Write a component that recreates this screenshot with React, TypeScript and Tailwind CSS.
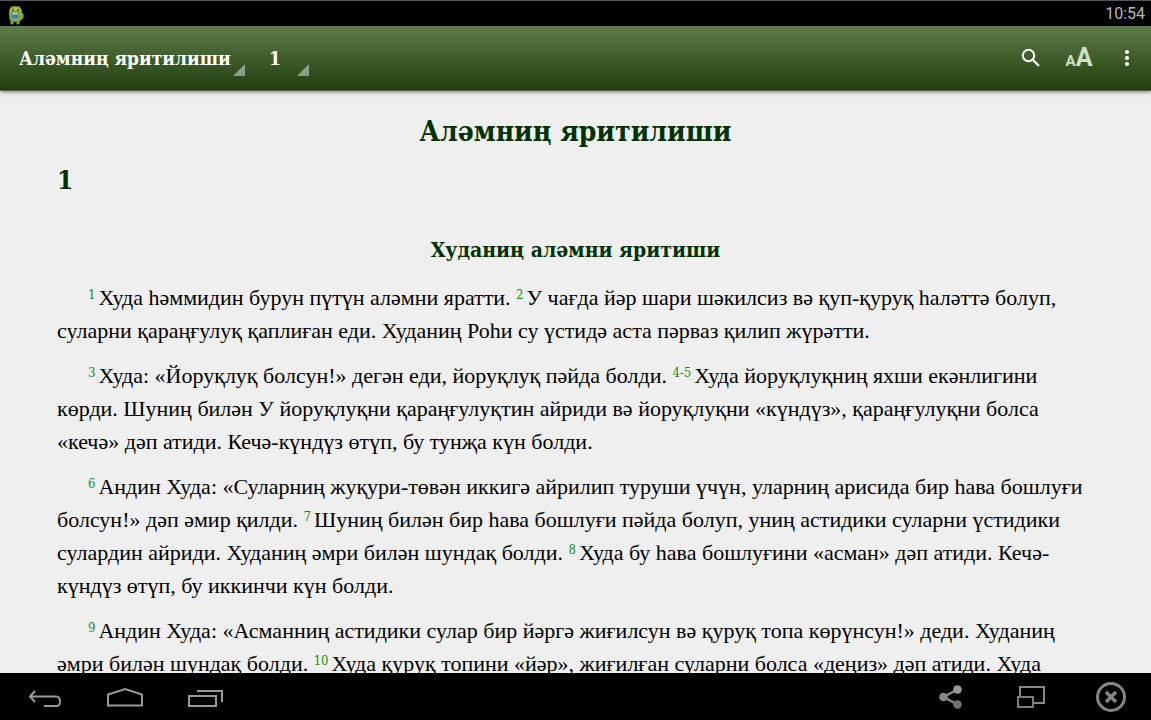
import React from "react";

interface Verse {
  label: string;
  text: string;
}

const paragraphs: Verse[][] = [
  [
    { label: "1", text: "Худа һәммидин бурун пүтүн аләмни яратти." },
    {
      label: "2",
      text: "У чағда йәр шари шәкилсиз вә қуп-қуруқ һаләттә болуп, суларни қараңғулуқ қаплиған еди. Худаниң Роһи су үстидә аста пәрваз қилип жүрәтти.",
    },
  ],
  [
    { label: "3", text: "Худа: «Йоруқлуқ болсун!» дегән еди, йоруқлуқ пәйда болди." },
    {
      label: "4-5",
      text: "Худа йоруқлуқниң яхши екәнлигини көрди. Шуниң билән У йоруқлуқни қараңғулуқтин айриди вә йоруқлуқни «күндүз», қараңғулуқни болса «кечә» дәп атиди. Кечә-күндүз өтүп, бу тунҗа күн болди.",
    },
  ],
  [
    {
      label: "6",
      text: "Андин Худа: «Суларниң жуқури-төвән иккигә айрилип туруши үчүн, уларниң арисида бир һава бошлуғи болсун!» дәп әмир қилди.",
    },
    {
      label: "7",
      text: "Шуниң билән бир һава бошлуғи пәйда болуп, униң астидики суларни үстидики сулардин айриди. Худаниң әмри билән шундақ болди.",
    },
    {
      label: "8",
      text: "Худа бу һава бошлуғини «асман» дәп атиди. Кечә-күндүз өтүп, бу иккинчи күн болди.",
    },
  ],
  [
    {
      label: "9",
      text: "Андин Худа: «Асманниң астидики сулар бир йәргә жиғилсун вә қуруқ топа көрүнсун!» деди. Худаниң әмри билән шундақ болди.",
    },
    { label: "10", text: "Худа қуруқ топини «йәр», жиғилған суларни болса «деңиз» дәп атиди. Худа" },
  ],
];

function StatusBar() {
  return (
    <div className="flex h-[26px] shrink-0 items-center justify-between border-t border-[#555] bg-black px-1.5">
      <svg width="20" height="22" viewBox="0 0 20 22" aria-hidden="true">
        <path d="M3 9Q3 3 9.500 3T16 9V16Q15 19 9.500 19T3.500 16Z" fill="#88a534" />
        <path d="M4 8Q4 4 9 4T15 8Z" fill="#a5bd49" />
        <path d="M5 18v3h2v-3M11 18v3h2v-3M16 10l1 1v4l-1 1" fill="#88a534" stroke="#88a534" />
        <path d="M5.500 4l-1-1M13 4l1-1" stroke="#748d2d" />
        <circle cx="7" cy="7" r="1" fill="#3c4a18" />
        <circle cx="12" cy="7" r="1" fill="#3c4a18" />
        <path d="M5.500 10h7v7h-7z" fill="#6aa3a8" />
        <path d="M6 12h6v3H6z" fill="#3b7fa4" />
        <path d="M7 10.500h4" stroke="#cfe0d0" />
      </svg>
      <span className="text-[16px] leading-6 text-[#b8b8b8]">10:54</span>
    </div>
  );
}

interface SpinnerProps {
  label: string;
  value: string;
  className?: string;
}

function Spinner({ label, value, className }: SpinnerProps) {
  return (
    <div className={`relative flex h-9 items-center ${className ?? ""}`}>
      <select
        aria-label={label}
        defaultValue={value}
        className="h-full w-full appearance-none bg-transparent font-['DejaVu_Serif_Condensed','DejaVu_Serif',serif] text-[19px] font-bold text-white outline-none"
      >
        <option>{value}</option>
      </select>
      <svg className="pointer-events-none absolute right-0 bottom-0" width="12" height="12" aria-hidden="true">
        <path d="M12 0V12H0Z" fill="#8c9f86" />
      </svg>
    </div>
  );
}

function AppBar() {
  return (
    <header className="z-10 flex h-[65px] shrink-0 items-center justify-between border-b border-[#55624d] bg-linear-to-b from-[#5f7c4b] to-[#213f0b] shadow-[0_1px_4px_rgba(0,0,0,0.5)]">
      <div className="flex items-center pl-[19px]">
        <Spinner label="Китап" value="Аләмниң яритилиши" className="w-[226px]" />
        <Spinner label="Бап" value="1" className="w-16 pl-6" />
      </div>
      <div className="flex items-center">
        <button aria-label="Издәш" className="flex size-12 items-center justify-center">
          <svg width="20" height="20" viewBox="0 0 20 20" fill="none" stroke="#fff" strokeWidth="2">
            <circle cx="7.500" cy="7.500" r="5.700" />
            <path d="M11.500 11.500L18 18" strokeWidth="2.300" />
          </svg>
        </button>
        <button
          aria-label="Хәт өлчими"
          className="flex size-12 items-baseline justify-center font-bold text-[#cfe2cc]"
        >
          <span className="text-[15px] leading-12">A</span>
          <span className="text-[25px] leading-12">A</span>
        </button>
        <button aria-label="Тизимлик" className="flex size-12 items-center justify-center">
          <svg width="6" height="18" viewBox="0 0 6 18" fill="#fff">
            <circle cx="3" cy="3" r="2.100" />
            <circle cx="3" cy="9" r="2.100" />
            <circle cx="3" cy="15" r="2.100" />
          </svg>
        </button>
      </div>
    </header>
  );
}

function Chapter() {
  return (
    <main className="min-h-0 flex-1 overflow-hidden bg-[#efefef] px-[57px] pt-[21px] font-['DejaVu_Serif_Condensed','DejaVu_Serif',serif] text-black">
      <h1 className="text-center text-[28px] leading-10 font-bold text-[#003300]">Аләмниң яритилиши</h1>
      <p className="mt-2 text-[26px] leading-10 font-bold text-[#003300]">1</p>
      <h2 className="mt-8 mb-[13px] text-center text-[21px] leading-9 font-bold text-[#003300]">
        Худаниң аләмни яритиши
      </h2>
      {paragraphs.map((verses) => (
        <p
          key={verses[0].label}
          className="mb-3 indent-[31px] font-['Liberation_Serif',serif] text-[22px] leading-[33px]"
        >
          {verses.map((verse) => (
            <React.Fragment key={verse.label}>
              <sup className="mr-[3px] font-['DejaVu_Serif_Condensed','DejaVu_Serif',serif] text-[13px] leading-none text-[#109018]">
                {verse.label}
              </sup>
              {verse.text}{" "}
            </React.Fragment>
          ))}
        </p>
      ))}
    </main>
  );
}

interface NavButtonProps {
  label: string;
  children: React.ReactNode;
}

function NavButton({ label, children }: NavButtonProps) {
  return (
    <button aria-label={label} className="flex h-full w-20 items-center justify-center">
      {children}
    </button>
  );
}

function NavigationBar() {
  return (
    <nav className="flex h-[47px] shrink-0 items-center justify-between bg-black">
      <div className="flex h-full items-center pl-[5px]">
        <NavButton label="Арқиға">
          <svg width="36" height="24" viewBox="0 0 36 24" fill="none" stroke="#999" strokeWidth="2">
            <path d="M8 6L3 11.500L8 17M3 11.500H29Q33 11.500 33 16.500T29 21H17" />
          </svg>
        </NavButton>
        <NavButton label="Баш бәт">
          <svg width="38" height="24" viewBox="0 0 38 24" fill="none" stroke="#999" strokeWidth="2">
            <path d="M2 20.500V9.500L19 4L36 9.500V20.500Z" />
          </svg>
        </NavButton>
        <NavButton label="Йеқинқилар">
          <svg width="36" height="24" viewBox="0 0 36 24" fill="none" stroke="#999" strokeWidth="2">
            <path d="M2 11H29V21H2ZM10 6H35V17" />
          </svg>
        </NavButton>
      </div>
      <div className="flex h-full items-center">
        <NavButton label="Бөлүшүш">
          <svg width="26" height="26" viewBox="0 0 26 26" fill="#888">
            <path d="M19.500 5.500L5.500 13L19.500 20.500" fill="none" stroke="#888" strokeWidth="2.500" />
            <circle cx="19.500" cy="5.500" r="4.300" fill="#999" />
            <circle cx="5.500" cy="13" r="4.300" />
            <circle cx="19.500" cy="20.500" r="4.300" fill="#707070" />
          </svg>
        </NavButton>
        <NavButton label="Көзнәк">
          <svg width="30" height="24" viewBox="0 0 30 24" fill="none" stroke="#888" strokeWidth="2">
            <path d="M4 12V2H28V18H17" />
            <path d="M2 12H17V22H2Z" stroke="#7c7c7c" />
          </svg>
        </NavButton>
        <NavButton label="Йепиш">
          <svg width="32" height="32" viewBox="0 0 32 32" fill="none" stroke="#858585">
            <circle cx="16" cy="16" r="13.500" strokeWidth="3" />
            <path d="M11 11L21 21M21 11L11 21" strokeWidth="3.500" />
          </svg>
        </NavButton>
      </div>
    </nav>
  );
}

export default function App() {
  return (
    <div className="flex h-screen flex-col overflow-hidden font-['Roboto',sans-serif]">
      <StatusBar />
      <AppBar />
      <Chapter />
      <NavigationBar />
    </div>
  );
}
